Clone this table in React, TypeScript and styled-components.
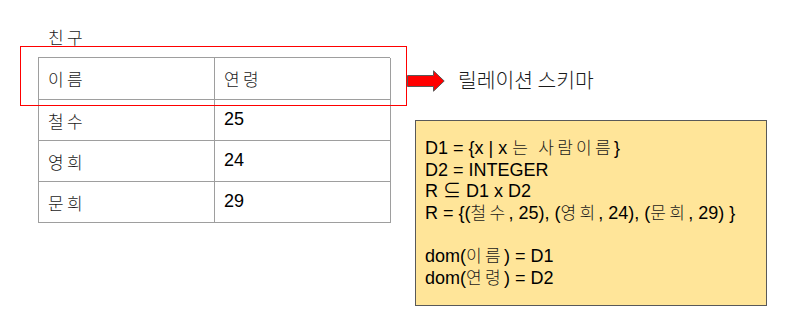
import React from "react";
import styled, { createGlobalStyle } from "styled-components";

const Global = createGlobalStyle`
  html, body { margin: 0; padding: 0; background: #ffffff; }
  body { font-family: "Liberation Sans", "Noto Sans CJK KR", Arial, sans-serif; color: #000; }
`;

const Slide = styled.div`
  width: 804px;
  height: 332px;
  box-sizing: border-box;
  padding: 28px 0 0 38px;
  display: flex;
  gap: 17px;
  font-size: 18px;
  line-height: 21.6px;
`;

const LeftCol = styled.div`
  display: flex;
  flex-direction: column;
  width: 352px;
`;

const Title = styled.div`
  padding-left: 10px;
  height: 22px;
`;

const TableWrap = styled.div`
  position: relative;
  margin-top: 7px;
`;

const Grid = styled.div`
  display: grid;
  grid-template-columns: 176px 176px;
  grid-template-rows: 42px 41px 41px 41px;
  border-top: 1px solid #9e9e9e;
  border-left: 1px solid #9e9e9e;
`;

const Cell = styled.div`
  display: flex;
  align-items: center;
  padding-left: 9px;
  border-right: 1px solid #9e9e9e;
  border-bottom: 1px solid #9e9e9e;
`;

const Highlight = styled.div`
  position: absolute;
  left: -18px;
  top: -11px;
  width: 387px;
  height: 60px;
  box-sizing: border-box;
  border: 1px solid #ff0000;
  pointer-events: none;
`;

const RightCol = styled.div`
  display: flex;
  flex-direction: column;
`;

const ArrowRow = styled.div`
  display: flex;
  align-items: center;
  gap: 13px;
  margin-top: 42px;
  height: 22px;
`;

const NoteBox = styled.div`
  margin-top: 28px;
  margin-left: 8px;
  width: 352px;
  height: 186px;
  box-sizing: border-box;
  border: 1px solid #595959;
  background: #ffe599;
  padding: 17px 9px 0 9px;
`;

const Line = styled.div`
  height: 21.6px;
  white-space: pre;
`;

const Ko = styled.span<{ $big?: boolean }>`
  font-family: "Noto Sans CJK KR", sans-serif;
  font-size: ${(p) => (p.$big ? "20.4px" : "17px")};
  letter-spacing: ${(p) => (p.$big ? "0" : "3.3px")};
  font-weight: 300;
  line-height: 1;
  color: #1a1a1a;
`;

function T({ children, big }: { children: string; big?: boolean }) {
  const parts = children.split(/([\uAC00-\uD7A3]+(?: [\uAC00-\uD7A3]+)*)/);
  return (
    <>
      {parts.map((p, i) =>
        i % 2 === 1 ? (
          <Ko key={i} $big={big}>{p}</Ko>
        ) : (
          <React.Fragment key={i}>{p}</React.Fragment>
        )
      )}
    </>
  );
}

const rows: [string, string][] = [
  ["철수", "25"],
  ["영희", "24"],
  ["문희", "29"],
];

const lines = [
  "D1 = {x | x 는 사람이름}",
  "D2 = INTEGER",
  "R ⊆ D1 x D2",
  "R = {(철수, 25), (영희, 24), (문희, 29) }",
  "",
  "dom(이름) = D1",
  "dom(연령) = D2",
];

export default function App() {
  return (
    <>
      <Global />
      <Slide>
        <LeftCol>
          <Title><T>친구</T></Title>
          <TableWrap>
            <Grid>
              <Cell><T>이름</T></Cell>
              <Cell><T>연령</T></Cell>
              {rows.map(([n, a]) => (
                <React.Fragment key={n}>
                  <Cell><T>{n}</T></Cell>
                  <Cell>{a}</Cell>
                </React.Fragment>
              ))}
            </Grid>
            <Highlight />
          </TableWrap>
        </LeftCol>
        <RightCol>
          <ArrowRow>
            <svg width="38" height="22" viewBox="0 0 38 22">
              <path
                d="M0.5 5.5 H26.5 V0.8 L37.2 11 L26.5 21.2 V16.5 H0.5 Z"
                fill="#ff0000"
                stroke="#595959"
                strokeWidth="1"
              />
            </svg>
            <span><T big>릴레이션 스키마</T></span>
          </ArrowRow>
          <NoteBox>
            {lines.map((l, i) => (
              <Line key={i}><T>{l}</T></Line>
            ))}
          </NoteBox>
        </RightCol>
      </Slide>
    </>
  );
}
